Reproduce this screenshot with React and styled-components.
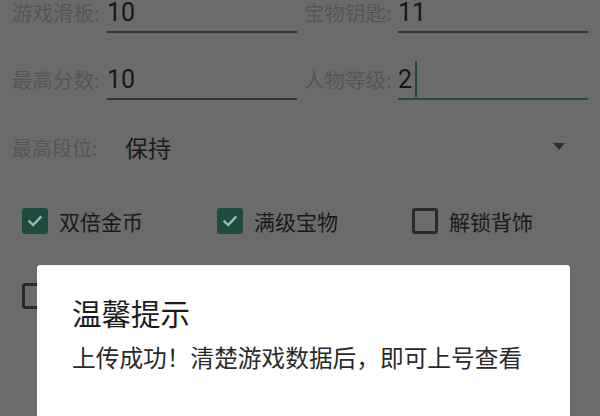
import React from "react";
import styled, { createGlobalStyle } from "styled-components";

const GlobalStyle = createGlobalStyle`
  html, body {
    margin: 0;
    padding: 0;
    background: #6b6b6b;
  }
  body {
    font-family: "Noto Sans CJK SC", "Noto Sans", sans-serif;
    overflow: hidden;
  }
`;

const Screen = styled.div`
  position: relative;
  width: 600px;
  height: 416px;
  overflow: hidden;
  background: #6b6b6b;
`;

const Form = styled.div`
  display: flex;
  flex-direction: column;
  margin-top: -7px;
  padding-left: 12px;
`;

const FieldRow = styled.div`
  display: grid;
  grid-template-columns: 95px 190px 101px 190px;
  align-items: start;
  margin-bottom: ${(p) => p.$gap || 0}px;
`;

const Label = styled.div`
  height: 38px;
  display: flex;
  align-items: center;
  padding-left: ${(p) => (p.$indent ? 7 : 0)}px;
  font-size: 20.5px;
  color: #555555;
  white-space: nowrap;
`;

const TextBox = styled.div`
  height: 38px;
  display: flex;
  align-items: center;
  border-bottom: 2px solid ${(p) => (p.$focused ? "#1f4a41" : "#333333")};
  font-family: Roboto, "Noto Sans", sans-serif;
  font-size: 25px;
  color: #161616;
`;

const Caret = styled.span`
  display: inline-block;
  width: 2px;
  height: 36px;
  margin-left: 3px;
  background: #1f4a41;
`;

const SpinnerRow = styled.div`
  display: grid;
  grid-template-columns: 113px 1fr;
  align-items: center;
  height: 48px;
  margin-top: 23px;
  padding-right: 35px;
`;

const SpinnerLabel = styled.div`
  font-size: 20px;
  color: #555555;
`;

const SpinnerValue = styled.div`
  display: flex;
  align-items: center;
  justify-content: space-between;
  font-size: 23px;
  color: #1a1a1a;
`;

const Arrow = styled.span`
  width: 0;
  height: 0;
  margin-top: -2px;
  border-left: 6px solid transparent;
  border-right: 6px solid transparent;
  border-top: 7px solid #2e2e2e;
`;

const CheckGrid = styled.div`
  display: grid;
  grid-template-columns: repeat(3, 195px);
  row-gap: 27px;
  margin-top: 26px;
  padding-left: 10px;
`;

const CheckItem = styled.label`
  display: flex;
  align-items: center;
  gap: 11px;
  height: 48px;
  font-size: 21px;
  color: #1a1a1a;
`;

const Box = styled.span`
  box-sizing: border-box;
  width: 26px;
  height: 26px;
  border-radius: 3px;
  display: flex;
  align-items: center;
  justify-content: center;
  background: ${(p) => (p.$checked ? "#1e4b40" : "transparent")};
  border: ${(p) => (p.$checked ? "none" : "3px solid #2a2a2a")};
`;

const Dialog = styled.div`
  position: absolute;
  left: 37px;
  right: 30px;
  top: 265px;
  bottom: -20px;
  background: #ffffff;
  border-radius: 3px;
  padding: 28px 35px 0;
  box-sizing: border-box;
`;

const DialogTitle = styled.div`
  font-size: 29.5px;
  line-height: 38px;
  color: #1c1c1c;
`;

const DialogMessage = styled.div`
  margin-top: 11px;
  font-size: 23.7px;
  line-height: 30px;
  color: #2a2a2a;
  white-space: nowrap;
`;

function Check({ checked, children }) {
  return (
    <CheckItem>
      <Box $checked={checked}>
        {checked && (
          <svg width="18" height="18" viewBox="0 0 18 18">
            <path
              d="M3.5 9.5 L7.2 13 L14.5 5.2"
              fill="none"
              stroke="#9bb8ae"
              strokeWidth="2.4"
              strokeLinecap="square"
            />
          </svg>
        )}
      </Box>
      {children}
    </CheckItem>
  );
}

export default function App() {
  return (
    <Screen>
      <GlobalStyle />
      <Form>
        <FieldRow $gap={27}>
          <Label>游戏滑板:</Label>
          <TextBox>10</TextBox>
          <Label $indent>宝物钥匙:</Label>
          <TextBox>11</TextBox>
        </FieldRow>
        <FieldRow>
          <Label>最高分数:</Label>
          <TextBox>10</TextBox>
          <Label $indent>人物等级:</Label>
          <TextBox $focused>
            2<Caret />
          </TextBox>
        </FieldRow>
        <SpinnerRow>
          <SpinnerLabel>最高段位:</SpinnerLabel>
          <SpinnerValue>
            保持
            <Arrow />
          </SpinnerValue>
        </SpinnerRow>
        <CheckGrid>
          <Check checked>双倍金币</Check>
          <Check checked>满级宝物</Check>
          <Check>解锁背饰</Check>
          <Check />
        </CheckGrid>
      </Form>
      <Dialog>
        <DialogTitle>温馨提示</DialogTitle>
        <DialogMessage>上传成功！清楚游戏数据后，即可上号查看</DialogMessage>
      </Dialog>
    </Screen>
  );
}
